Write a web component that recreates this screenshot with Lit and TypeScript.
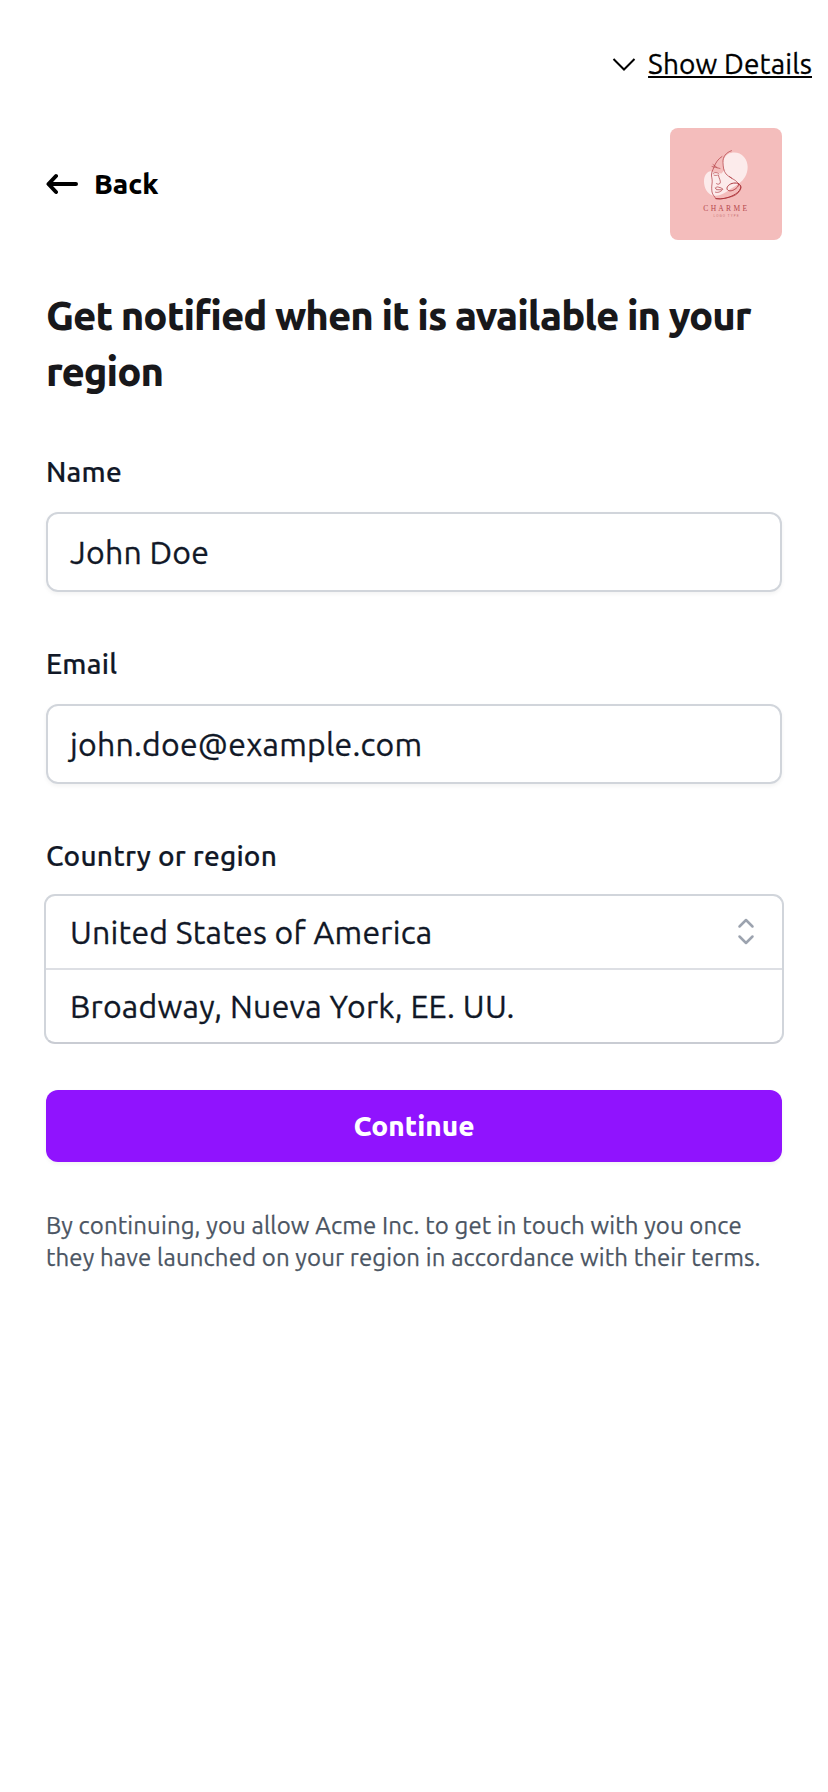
import { LitElement, html, css } from "lit";

class BrandLogo extends LitElement {
  static styles = css`
    :host { display: block; width: 112px; height: 112px; border-radius: 8px; overflow: hidden; background: #f4bdbc; }
    svg { display: block; }
    .name { font: 7.5px "Liberation Serif", serif; fill: #b5484d; }
    .tag { font: 2.8px "Liberation Sans", sans-serif; fill: #c4686b; }
  `;
  render() {
    return html`<svg width="112" height="112" viewBox="0 0 112 112" fill="none" stroke-linecap="round" stroke-linejoin="round">
      <path fill="#fcebeb" d="M58 26c5-2.500 12-2 16 3 5 6 4.500 14 1 20-3 5-8 8-13 11-6 4-12 9-19 7.500-6-1.500-9-8-9-14 0-6 3-10.500 8-10.500 4 0 7 1 9 0 3-3 0-13 7-17z"/>
      <path fill="#f4bdbc" d="M59 24c-7 4-7 12-4.500 18l-3 3.500-10-1.500c1-7 4-14 9-17z"/>
      <g stroke="#ae373d">
        <path stroke-width="0.800" opacity="0.850" d="M61.500 22.700C56 24.500 52.500 29 53 34.500c.3 5 .5 8 3 11.500 3.500 4 9 5 12 9 2 2.500 3.500 3.500 2.800 5.500C69.500 65 65 68 60 69c-4.500 1.200-9 2.400-13.500 1.700"/>
        <path stroke-width="0.700" d="M52 28.500C48 31 45.500 35 44 39c-1.500 4-3 6-2.500 9 .5 2.500 1 5 .5 8-.5 3-.3 5.500 0 8 .6 2.800 2.500 4.500 4 6.700"/>
        <path stroke-width="1" d="M46 70.700c6 .8 12-.7 17-3.200 3.500-1.800 6.500-4 7.700-7.500.8-3-2.200-5-5.700-5-4 0-8 2.500-8 5.500.2 2.700 4 2.800 6.500 1.500 3-1.700 5.500-3.500 5-6.500"/>
        <path stroke-width="0.600" d="M42 38.500c2 .8 5 1 8 2M43 36.500l4 3M43 45.500c2-1.500 4-1.300 6 .5M44 47.200c1.500.5 3 .3 4-.2"/>
        <path stroke-width="0.700" d="M48.500 47.500c.5 3 2.500 5.500 1.700 7.500-.7 1.500-2.700 1.500-3.700.7M45.500 60c1.200-1.500 2.500-1.200 3.500-.6 1.500 0 2.500.8 4 1.800-1.700 2-4.500 4-7.500 3M45.500 60l1 1.700 5 .1M59.500 48.500l2.500 2"/>
      </g>
      <text class="name" x="33.300" y="83.300" textLength="43.700">CHARME</text>
      <text class="tag" x="43.500" y="89" textLength="25">LOGO TYPE</text>
    </svg>`;
  }
}
customElements.define("brand-logo", BrandLogo);

class AppRoot extends LitElement {
  static styles = css`
    :host { display: block; height: 1792px; box-sizing: border-box; overflow: hidden; background: #fff; color: #111827; font-family: Ubuntu, "Noto Sans", sans-serif; }
    * { box-sizing: border-box; }
    svg { display: block; flex: none; }
    .top { display: flex; justify-content: flex-end; align-items: center; gap: 12px; height: 128px; padding-right: 16px; color: #000; font-size: 28px; line-height: 40px; letter-spacing: 0.16px; -webkit-text-stroke: 0.3px currentColor; }
    .top a { text-decoration: underline; text-underline-offset: 2px; text-decoration-thickness: 2px; }
    main { padding: 0 46px; }
    .head { display: flex; align-items: center; justify-content: space-between; height: 112px; }
    .back { display: flex; align-items: center; gap: 16px; color: #000; font-size: 28px; line-height: 40px; font-weight: 800; }
    h1 { margin: 48px 0 0; font-size: 40px; line-height: 56px; font-weight: 800; letter-spacing: -1px; color: #18181b; }
    .label { display: block; font-size: 28px; line-height: 40px; font-weight: 500; letter-spacing: 0.24px; -webkit-text-stroke: 0.2px currentColor; }
    .field { margin-top: 52px; }
    .input, .row { display: flex; align-items: center; font-size: 32px; line-height: 48px; letter-spacing: 0.24px; -webkit-text-stroke: 0.3px currentColor; }
    .input { height: 80px; margin-top: 20px; padding: 0 22px; border: 2px solid #d1d5db; border-radius: 12px; box-shadow: 0 2px 4px rgba(0,0,0,.05); }
    .group { margin: 18px -2px 0; border: 2px solid #d1d5db; border-bottom-color: #c9ccd3; border-radius: 11px; }
    .row { justify-content: space-between; height: 72px; padding: 0 24px; }
    .row + .row { height: 74px; border-top: 2px solid #dddfe4; }
    .btn { display: flex; align-items: center; justify-content: center; height: 72px; margin-top: 46px; border-radius: 12px; background: #9013fe; color: #fff; font-size: 28px; line-height: 40px; font-weight: 800; box-shadow: 0 2px 4px rgba(0,0,0,.05); }
    .note { margin: 48px 0 0; font-size: 24px; line-height: 32px; letter-spacing: 0.115px; color: #4b5563; white-space: nowrap; -webkit-text-stroke: 0.25px currentColor; }
  `;
  render() {
    return html`
      <div class="top">
        <svg width="24" height="24" viewBox="0 0 24 24" fill="none" stroke="#000" stroke-width="2"><path d="M1.500 7L12 17.500 22.500 7"/></svg>
        <a>Show Details</a>
      </div>
      <main>
        <div class="head">
          <div class="back">
            <svg width="32" height="24" viewBox="0 0 32 24" fill="none" stroke="#000" stroke-width="4" stroke-linecap="round" stroke-linejoin="round"><path d="M10 4L2.500 12 10 20M2.500 12H30"/></svg>
            <span>Back</span>
          </div>
          <brand-logo></brand-logo>
        </div>
        <h1>Get notified when it is available in your<br>region</h1>
        <div class="field"><span class="label">Name</span><div class="input">John Doe</div></div>
        <div class="field"><span class="label">Email</span><div class="input">john.doe@example.com</div></div>
        <div class="field"><span class="label">Country or region</span>
          <div class="group">
            <div class="row"><span>United States of America</span>
              <svg width="24" height="28" viewBox="0 0 24 28" fill="none" stroke="#9ca3af" stroke-width="2.500" stroke-linecap="round" stroke-linejoin="round"><path d="M5.500 8.500L12 2l6.500 6.500M5.500 18.500L12 25l6.500-6.500"/></svg>
            </div>
            <div class="row"><span>Broadway, Nueva York, EE. UU.</span></div>
          </div>
        </div>
        <div class="btn">Continue</div>
        <p class="note">By continuing, you allow Acme Inc. to get in touch with you once<br>they have launched on your region in accordance with their terms.</p>
      </main>`;
  }
}
customElements.define("app-root", AppRoot);
